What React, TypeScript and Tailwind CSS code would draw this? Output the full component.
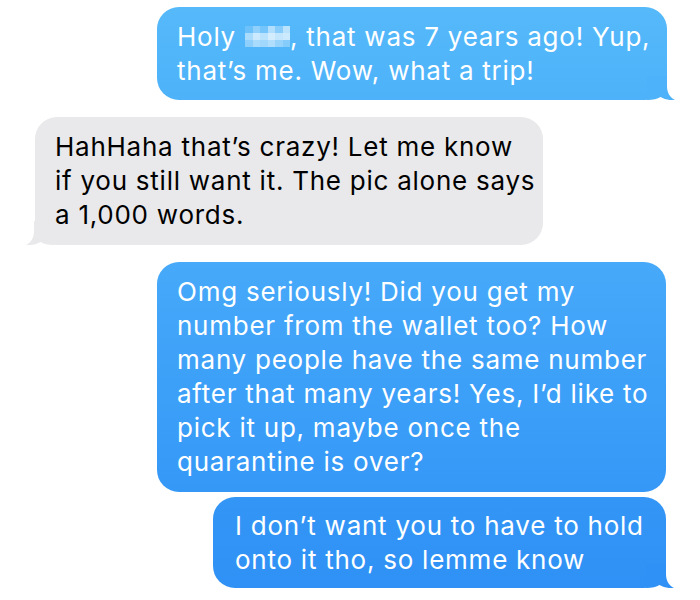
import React from 'react';

type Side = 'left' | 'right';

interface BubbleProps {
  side: Side;
  lines: React.ReactNode[];
  className: string;
  tail?: string;
}

// pixelated censor block over the swear word
const blurCells = [
  0.15, 0.35, 0.2, 0.55, 0.3, 0.6,
  0.5, 0.7, 0.6, 0.75, 0.65, 0.7,
  0.35, 0.5, 0.45, 0.55, 0.4, 0.3,
];

function Censored() {
  return (
    <span className="relative top-[6px] inline-grid grid-cols-6 w-[45px] h-[21px] align-top ml-[1px]">
      {blurCells.map((o, i) => (
        <span key={i} className="block bg-white" style={{ opacity: o }} />
      ))}
    </span>
  );
}

function Tail({ side, color }: { side: Side; color: string }) {
  return (
    <svg
      width="28"
      height="24"
      viewBox="0 0 28 24"
      className={
        side === 'right'
          ? 'absolute bottom-0 right-[-8px]'
          : 'absolute bottom-0 left-[-9px] -scale-x-100'
      }
    >
      <path
        d="M20 0 L20 10 C20 17 23 21.5 28 24 C22.5 24.6 17.5 23.2 13.5 21 C10.5 23 6 24 0 24 L0 0 Z"
        fill={color}
      />
    </svg>
  );
}

function Bubble({ side, lines, className, tail }: BubbleProps) {
  return (
    <div className={`relative rounded-[22px] ${className}`}>
      {lines.map((l, i) => (
        <div key={i} className="h-[34px] whitespace-nowrap">
          {l}
        </div>
      ))}
      {tail && <Tail side={side} color={tail} />}
    </div>
  );
}

export default function App() {
  return (
    <div className="w-[700px] h-[600px] bg-white overflow-hidden pt-[7px] flex flex-col font-['Inter',sans-serif] text-[26px] leading-[34px] tracking-[0.75px]">
      {/* sent */}
      <Bubble
        side="right"
        tail="#4db2f9"
        className="self-end mr-[33px] w-[510px] px-[20px] py-[12.5px] text-white bg-gradient-to-b from-[#55b9fa] to-[#4db2f9]"
        lines={[
          <>
            Holy <Censored />, that was 7 years ago! Yup,
          </>,
          'that’s me. Wow, what a trip!',
        ]}
      />

      {/* received */}
      <Bubble
        side="left"
        tail="#e9e9eb"
        className="self-start ml-[35px] mt-[17px] w-[508px] px-[20px] py-[13px] text-black bg-[#e9e9eb]"
        lines={[
          'HahHaha that’s crazy! Let me know',
          'if you still want it. The pic alone says',
          'a 1,000 words.',
        ]}
      />

      {/* sent group */}
      <Bubble
        side="right"
        className="self-end mr-[34px] mt-[17px] w-[509px] px-[20px] py-[13px] text-white bg-gradient-to-b from-[#46a9f9] to-[#3598f7]"
        lines={[
          'Omg seriously! Did you get my',
          'number from the wallet too? How',
          'many people have the same number',
          'after that many years! Yes, I’d like to',
          'pick it up, maybe once the',
          'quarantine is over?',
        ]}
      />
      <Bubble
        side="right"
        tail="#2f91f5"
        className="self-end mr-[34px] mt-[5px] w-[453px] px-[22px] py-[11.5px] text-white bg-gradient-to-b from-[#3396f6] to-[#2f91f5]"
        lines={['I don’t want you to have to hold', 'onto it tho, so lemme know']}
      />
    </div>
  );
}
